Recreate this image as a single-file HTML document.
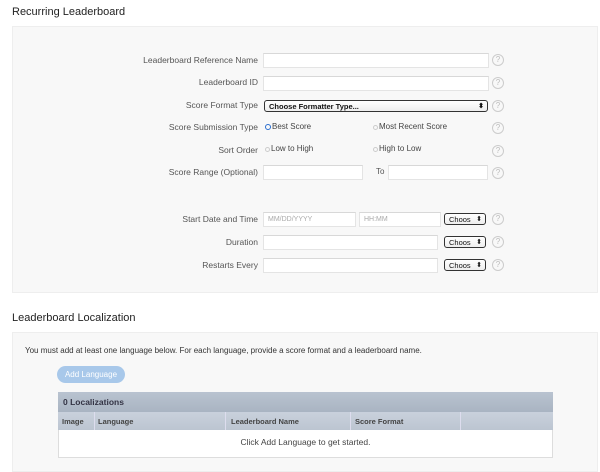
<!DOCTYPE html>
<html><head><style>
*{box-sizing:border-box;margin:0;padding:0}
body{width:600px;height:470px;background:#fff;font-family:"Liberation Sans",sans-serif;position:relative;overflow:hidden;color:#444}
.a{position:absolute}
h2{position:absolute;font-size:11px;font-weight:normal;color:#222;left:12px}
.panel{position:absolute;left:12px;width:586px;background:#f8f8f8;border:1px solid #eee}
.lbl{position:absolute;right:342px;font-size:8.5px;color:#555;text-align:right;white-space:nowrap}
.in{position:absolute;height:15px;background:#fff;border:1px solid #e4e4e4;border-top-color:#d8d8d8;font-size:7px;color:#aaa;padding:3px 4px}
.sel{position:absolute;height:12px;border:1px solid #333;border-radius:3px;background:linear-gradient(#fff,#eee);font-size:7.5px;color:#111;padding:1px 4px;white-space:nowrap;overflow:hidden}
.sel:after{content:"⬍";position:absolute;right:3px;top:1px;font-size:7px}
.q{position:absolute;left:492px;width:12px;height:12px;border:1px solid #ccc;border-radius:50%;font-size:8px;color:#bbb;text-align:center;line-height:10px}
.r{position:absolute;font-size:8px;color:#444;white-space:nowrap}
.r i{display:inline-block;width:5px;height:5px;border:1px solid #ccc;border-radius:50%;margin-right:1px;vertical-align:-1px}
.r i.on{border:1.5px solid #2a6ecf;width:6px;height:6px}
</style></head><body>
<h2 style="top:6px">Recurring Leaderboard</h2>
<div class="panel" style="top:26px;height:267px"></div>

<div class="lbl" style="top:55px">Leaderboard Reference Name</div>
<div class="in" style="left:263px;top:53px;width:226px"></div>
<div class="q" style="top:54px">?</div>

<div class="lbl" style="top:77px">Leaderboard ID</div>
<div class="in" style="left:263px;top:76px;width:226px"></div>
<div class="q" style="top:77px">?</div>

<div class="lbl" style="top:100px">Score Format Type</div>
<div class="sel" style="left:264px;top:100px;width:224px;font-weight:bold;font-size:7.5px">Choose Formatter Type...</div>
<div class="q" style="top:100px">?</div>

<div class="lbl" style="top:122px">Score Submission Type</div>
<div class="r" style="left:265px;top:122px"><i class="on"></i>Best Score</div>
<div class="r" style="left:373px;top:122px"><i></i>Most Recent Score</div>
<div class="q" style="top:122px">?</div>

<div class="lbl" style="top:145px">Sort Order</div>
<div class="r" style="left:265px;top:144px"><i></i>Low to High</div>
<div class="r" style="left:373px;top:144px"><i></i>High to Low</div>
<div class="q" style="top:145px">?</div>

<div class="lbl" style="top:167px">Score Range (Optional)</div>
<div class="in" style="left:263px;top:165px;width:100px"></div>
<div class="a" style="left:376px;top:167px;font-size:8px;color:#555">To</div>
<div class="in" style="left:388px;top:165px;width:100px"></div>
<div class="q" style="top:167px">?</div>

<div class="lbl" style="top:214px">Start Date and Time</div>
<div class="in" style="left:263px;top:212px;width:93px">MM/DD/YYYY</div>
<div class="in" style="left:359px;top:212px;width:82px">HH:MM</div>
<div class="sel" style="left:444px;top:213px;width:42px">Choos</div>
<div class="q" style="top:213px">?</div>

<div class="lbl" style="top:237px">Duration</div>
<div class="in" style="left:263px;top:235px;width:175px"></div>
<div class="sel" style="left:444px;top:236px;width:42px">Choos</div>
<div class="q" style="top:236px">?</div>

<div class="lbl" style="top:260px">Restarts Every</div>
<div class="in" style="left:263px;top:258px;width:175px"></div>
<div class="sel" style="left:444px;top:259px;width:42px">Choos</div>
<div class="q" style="top:259px">?</div>

<h2 style="top:312px">Leaderboard Localization</h2>
<div class="panel" style="top:332px;height:140px"></div>
<div class="a" style="left:25px;top:346px;font-size:8px;color:#333">You must add at least one language below. For each language, provide a score format and a leaderboard name.</div>
<div class="a" style="left:57px;top:366px;width:68px;height:17px;border-radius:9px;background:#a8c8ea;color:#fff;font-size:8px;text-align:center;line-height:17px">Add Language</div>
<div class="a" style="left:58px;top:392px;width:495px;height:66px;background:#fff;border:1px solid #ddd"></div>
<div class="a" style="left:58px;top:392px;width:495px;height:20px;background:linear-gradient(#b9c3d0,#a9b4c2);color:#334;font-size:8.5px;font-weight:bold;padding:5px 5px">0 Localizations</div>
<div class="a" style="left:58px;top:412px;width:495px;height:18px;background:linear-gradient(#c9d1dc,#bcc5d1)"></div>
<div class="a" style="left:62px;top:417px;font-size:7.5px;font-weight:bold;color:#444">Image</div>
<div class="a" style="left:94px;top:412px;width:1px;height:18px;background:#dde"></div>
<div class="a" style="left:98px;top:417px;font-size:7.5px;font-weight:bold;color:#444">Language</div>
<div class="a" style="left:225px;top:412px;width:1px;height:18px;background:#dde"></div>
<div class="a" style="left:231px;top:417px;font-size:7.5px;font-weight:bold;color:#444">Leaderboard Name</div>
<div class="a" style="left:350px;top:412px;width:1px;height:18px;background:#dde"></div>
<div class="a" style="left:355px;top:417px;font-size:7.5px;font-weight:bold;color:#444">Score Format</div>
<div class="a" style="left:460px;top:412px;width:1px;height:18px;background:#dde"></div>
<div class="a" style="left:58px;top:437px;width:495px;text-align:center;font-size:8.5px;color:#444">Click Add Language to get started.</div>
</body></html>
